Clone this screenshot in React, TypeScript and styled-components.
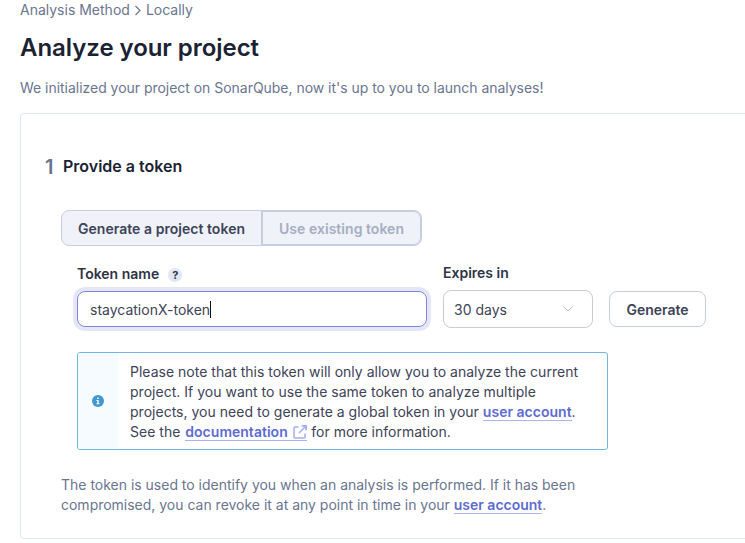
import React from 'react';
import styled, { createGlobalStyle } from 'styled-components';

const Global = createGlobalStyle`
  *{box-sizing:border-box}
  body{margin:0;background:#fff;font-family:Inter,sans-serif;font-size:14px;line-height:20px;color:#3e4357;overflow:hidden}
  h1,h2,p{margin:0}
`;
const Page = styled.main`height:543px;overflow:hidden;padding-left:20px;`;
const Crumbs = styled.nav`display:flex;align-items:center;height:20px;color:#6a7590;gap:4px;`;
const Title = styled.h1`margin-top:12px;font-size:24px;line-height:32px;font-weight:600;letter-spacing:-.05px;color:#1a2233;`;
const Intro = styled.p`margin-top:14px;color:#6a7590;letter-spacing:-.03px;`;
const Card = styled.section`margin-top:15px;width:760px;height:426px;border:1px solid #e1e6f3;border-radius:4px;padding:40px 24px;`;
const StepTitle = styled.h2`display:flex;align-items:center;gap:10px;height:24px;font-size:16px;line-height:24px;font-weight:600;color:#1a2233;`;
const StepNumber = styled.span`width:8px;font-size:20px;color:#6a7590;padding-top:1px;`;
const Body = styled.div`margin:32px 0 0 16px;`;
const Toggle = styled.div`display:flex;width:361px;height:36px;border:1px solid #c5cddf;border-radius:8px;background:#eff2f9;`;
const Option = styled.button<{ $off?: boolean }>`
  flex:${p => p.$off ? '1' : '0 0 199px'};
  border:${p => p.$off ? '1px solid #c5cddf' : '0'};
  border-left-width:${p => p.$off ? '2px' : '0'};
  border-radius:0 7px 7px 0;background:none;padding:2px 0 0;white-space:nowrap;
  font:600 14px/20px Inter,sans-serif;letter-spacing:.04px;color:${p => p.$off ? '#a6adc1' : '#3e4357'};
`;
const Form = styled.div`display:flex;margin:18px 0 0 16px;align-items:flex-end;gap:16px;`;
const Field = styled.div`display:flex;flex-direction:column;gap:7px;`;
const Label = styled.label`display:flex;align-items:center;gap:9px;font-weight:600;height:20px;color:#2e3346;`;
const Help = styled.span`display:flex;align-items:center;justify-content:center;width:14px;height:14px;border-radius:7px;background:#e1e6f3;font-size:11px;line-height:14px;font-weight:700;margin-top:2px;`;
const Input = styled.div`display:flex;align-items:center;width:350px;height:36px;border:1px solid #7b87d9;border-radius:8px;padding:2px 12px 0;box-shadow:0 0 0 4px #e4e6f8;`;
const Caret = styled.span`width:1px;height:17px;margin-top:-2px;background:#111;`;
const Select = styled.div`display:flex;align-items:center;justify-content:space-between;width:150px;height:38px;border:1px solid #ccc;border-radius:8px;padding:2px 18px 0 10px;`;
const Chevron = styled.svg`margin-top:-2px;`;
const Button = styled.button`width:97px;height:36px;border:1px solid #c5cddf;border-radius:8px;background:#fff;font:600 14px/20px Inter,sans-serif;color:#3e4357;padding:2px 0 0;`;
const FieldRow = styled.div<{ $lift?: boolean }>`height:64px;display:flex;align-items:flex-end;padding-bottom:${p => p.$lift ? '0' : '1px'};`;
const Notice = styled.div`display:flex;width:531px;height:98px;margin:24px 0 0 16px;border:1px solid #6cb9e0;border-radius:3px;`;
const NoticeIcon = styled.div`display:flex;align-items:center;justify-content:center;width:40px;background:#f5fbff;border-radius:2px 0 0 2px;`;
const NoticeText = styled.p`padding:9px 12px;white-space:nowrap;letter-spacing:.015px;`;
const Link = styled.a<{ $spaced?: boolean }>`font-weight:600;color:#5d6cd0;border-bottom:1px solid #a9b3ec;margin-left:${p => p.$spaced ? '1px' : '0'};`;
const LinkIcon = styled.svg`margin-left:2px;vertical-align:-2px;color:#a6afec;`;
const Footer = styled.p`margin-top:25px;color:#6a7590;white-space:nowrap;letter-spacing:-.01px;`;

export default function App() {
  return <Page><Global />
    <Crumbs><span>Analysis Method</span><svg width="8" height="12" viewBox="0 0 8 12" fill="none" stroke="currentColor" strokeWidth="1.2"><path d="m1.5 2 4.5 4.5L1.5 11" /></svg><span>Locally</span></Crumbs>
    <Title>Analyze your project</Title>
    <Intro>We initialized your project on SonarQube, now it's up to you to launch analyses!</Intro>
    <Card>
      <StepTitle><StepNumber>1</StepNumber>Provide a token</StepTitle>
      <Body>
        <Toggle><Option>Generate a project token</Option><Option $off>Use existing token</Option></Toggle>
        <Form>
          <FieldRow><Field><Label>Token name<Help>?</Help></Label><Input>staycationX-token<Caret /></Input></Field></FieldRow>
          <FieldRow $lift><Field><Label>Expires in</Label><Select>30 days<Chevron width="12" height="8" fill="none" stroke="#bbb"><path d="m1.5 1.5 4.5 4.5 4.5-4.5" /></Chevron></Select></Field></FieldRow>
          <FieldRow><Button>Generate</Button></FieldRow>
        </Form>
        <Notice>
          <NoticeIcon><svg width="12" height="12" viewBox="0 0 12 12"><circle cx="6" cy="6" r="6" fill="#4397cc" /><path d="M4.5 5h2.2v4H5.3V6h-.8ZM4.5 8.2h3V9.3h-3ZM5.2 2.5h1.5V4H5.2Z" fill="#fff" /></svg></NoticeIcon>
          <NoticeText>Please note that this token will only allow you to analyze the current<br />project. If you want to use the same token to analyze multiple<br />projects, you need to generate a global token in your <Link>user account</Link>.<br />See the <Link $spaced>documentation <LinkIcon width="14" height="14" viewBox="0 0 14 14" fill="none" stroke="currentColor" strokeWidth="1.5"><path d="M5.5 2H2Q1 2 1 3v9q0 1 1 1h9q1 0 1-1V8.5M8.5 1H13v4.5M13 1 6 8" /><path d="M9 0h5v5Z" fill="currentColor" stroke="none" /></LinkIcon></Link> for more information.</NoticeText>
        </Notice>
        <Footer>The token is used to identify you when an analysis is performed. If it has been<br />compromised, you can revoke it at any point in time in your <Link>user account</Link>.</Footer>
      </Body>
    </Card>
  </Page>;
}
